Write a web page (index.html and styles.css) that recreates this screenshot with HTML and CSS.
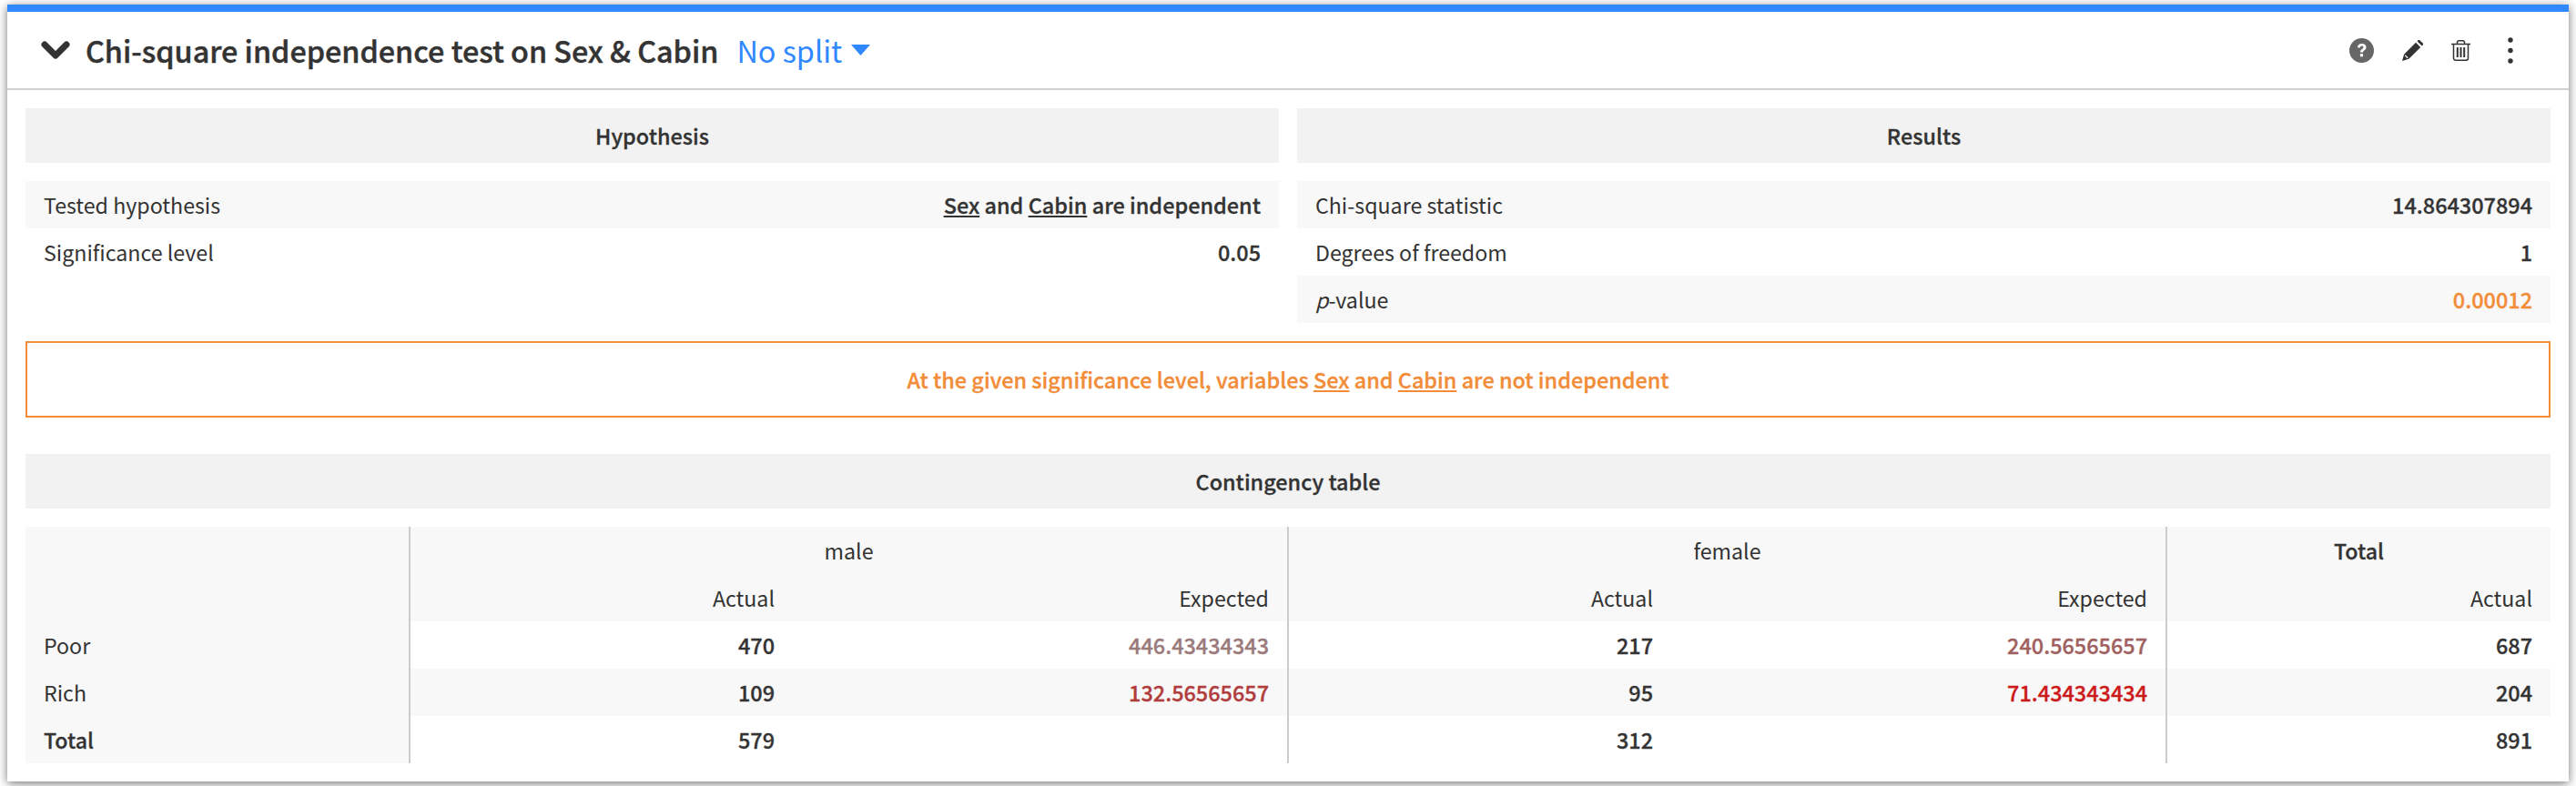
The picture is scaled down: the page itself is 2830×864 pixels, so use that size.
FILE: index.html
```html
<!DOCTYPE html>
<html lang="en">
<head>
<meta charset="utf-8">
<title>Chi-square independence test</title>
<link rel="stylesheet" href="styles.css">
</head>
<body>
<section class="card">
  <header class="card-head">
    <svg class="chevron" viewBox="0 0 32 20"><path d="M4 4l12 12L28 4" fill="none" stroke="#333" stroke-width="7" stroke-linecap="round" stroke-linejoin="round"/></svg>
    <h1 class="title">Chi-square independence test on Sex &amp; Cabin</h1>
    <span class="split">No split</span>
    <svg class="caret" viewBox="0 0 21 12"><path d="M0 0h21L10.5 12z" fill="#2f88ff"/></svg>
    <div class="actions">
      <svg class="ico-help" viewBox="0 0 27 27"><circle cx="13.5" cy="13.5" r="13.5" fill="#666"/><path d="M8.800 10.200c.4-2.800 2.300-4.300 4.900-4.300 2.800 0 4.800 1.600 4.800 4 0 1.800-1 2.700-2.200 3.500-.9.600-1.300 1.100-1.300 2.200h-3c0-2 .8-3 2-3.800.9-.6 1.400-1 1.400-1.800 0-.9-.7-1.400-1.700-1.400-1.100 0-1.700.7-1.900 1.800z" fill="#fff"/><rect x="11.900" y="17.200" width="3.100" height="3.100" fill="#fff"/></svg>
      <svg class="ico-pen" viewBox="0 0 23 23"><path d="M16.500 1.200l1-1c.6-.5 1.300-.5 1.900 0l3.300 3.300c.5.600.5 1.300 0 1.900l-1 1zM15 2.700l5.200 5.200L7.300 20.800 0 23l2.100-7.300z" fill="#333"/><path d="M3.300 16.900l2.800 2.800" stroke="#fff" stroke-width="1.300"/></svg>
      <svg class="ico-trash" viewBox="0 0 21 23"><path d="M0 4.500h21M2.500 4.500V20a2.200 2.200 0 0 0 2.200 2.200h11.600a2.200 2.200 0 0 0 2.200-2.200V4.500M6.500 4.500V2.700c0-1.200.8-1.900 1.900-1.900h4.200c1.100 0 1.900.7 1.900 1.900v1.800" fill="none" stroke="#333" stroke-width="1.500"/><path d="M6.800 8v11M10.500 8v11M14.200 8v11" stroke="#333" stroke-width="2"/></svg>
      <svg class="ico-dots" viewBox="0 0 6 29"><circle cx="3" cy="3" r="2.700" fill="#333"/><circle cx="3" cy="14.500" r="2.700" fill="#333"/><circle cx="3" cy="26" r="2.700" fill="#333"/></svg>
    </div>
  </header>
  <div class="card-body">
    <div class="panels">
      <div class="panel">
        <h2 class="band">Hypothesis</h2>
        <div class="row shade"><span>Tested hypothesis</span><b><u>Sex</u> and <u>Cabin</u> are independent</b></div>
        <div class="row"><span>Significance level</span><b>0.05</b></div>
      </div>
      <div class="panel">
        <h2 class="band">Results</h2>
        <div class="row shade"><span>Chi-square statistic</span><b>14.864307894</b></div>
        <div class="row"><span>Degrees of freedom</span><b>1</b></div>
        <div class="row shade"><span><i>p</i>-value</span><b class="warn">0.00012</b></div>
      </div>
    </div>
    <div class="verdict">At the given significance level, variables <u>Sex</u> and <u>Cabin</u> are not independent</div>
    <h2 class="band">Contingency table</h2>
    <table class="grid">
      <colgroup><col class="c-label"><col class="c-act"><col class="c-exp"><col class="c-act"><col class="c-exp"><col class="c-total"></colgroup>
      <thead>
        <tr><th class="side" rowspan="2"></th><th class="group" colspan="2">male</th><th class="group" colspan="2">female</th><th class="group strong">Total</th></tr>
        <tr><th class="sub">Actual</th><th class="sub">Expected</th><th class="sub">Actual</th><th class="sub">Expected</th><th class="sub">Actual</th></tr>
      </thead>
      <tbody>
        <tr><th class="side">Poor</th><td>470</td><td class="e1">446.43434343</td><td>217</td><td class="e2">240.56565657</td><td>687</td></tr>
        <tr class="alt"><th class="side">Rich</th><td>109</td><td class="e3">132.56565657</td><td>95</td><td class="e4">71.434343434</td><td>204</td></tr>
        <tr><th class="side strong">Total</th><td>579</td><td></td><td>312</td><td></td><td>891</td></tr>
      </tbody>
    </table>
  </div>
</section>
</body>
</html>
```

FILE: styles.css
```css
* { box-sizing: border-box; }
html, body { height: 100%; }
body {
  margin: 0;
  padding: 5px 8px;
  background: #fff;
  color: #333;
  font-family: "Noto Sans CJK SC", "Source Sans Pro", "Noto Sans", sans-serif;
  font-size: 23.2px;
  line-height: 32px;
  overflow: hidden;
}
.card {
  background: #fff;
  border-top: 8px solid #2f88ff;
  height: 854px;
  box-shadow: 0 2px 10px rgba(0,0,0,.55);
}
.card-head {
  height: 86px;
  border-bottom: 2px solid #d0d0d0;
  display: flex;
  align-items: center;
  padding: 0 0 0 37px;
}
.chevron { width: 32px; height: 20px; margin-right: 17px; }
.title { margin: 0; font-size: 32.3px; font-weight: 500; -webkit-text-stroke: .45px currentColor; line-height: 44px; }
.split { color: #2f88ff; font-size: 32.4px; line-height: 44px; margin-left: 20px; }
.caret { width: 21px; height: 12px; margin-left: 10px; }
.actions { margin-left: auto; display: flex; align-items: center; padding-right: 61px; }
.ico-help { width: 27px; height: 27px; margin-right: 31px; }
.ico-pen { width: 23px; height: 23px; margin-right: 31px; }
.ico-trash { width: 21px; height: 23px; margin-right: 41px; }
.ico-dots { width: 6px; height: 29px; }
.card-body { padding: 20px; }
.panels { display: grid; grid-template-columns: 1fr 1fr; gap: 20px; }
.band {
  margin: 0 0 20px;
  height: 60px;
  background: #f2f2f2;
  font-size: 23.4px;
  font-weight: 500;
  -webkit-text-stroke: .3px currentColor;
  line-height: 60px;
  text-align: center;
}
.row {
  height: 52px;
  display: flex;
  justify-content: space-between;
  align-items: center;
  padding: 0 20px;
}
.row b { font-size: 23.45px; font-weight: 500; -webkit-text-stroke: .3px currentColor; }
.shade { background: #f8f8f8; }
.warn { color: #f28c38; }
.verdict {
  margin: 20px 0 40px;
  height: 84px;
  border: 2px solid #f28c38;
  color: #f28c38;
  font-size: 23.4px;
  font-weight: 500;
  -webkit-text-stroke: .3px currentColor;
  line-height: 80px;
  text-align: center;
}
.grid { width: 100%; border-collapse: separate; border-spacing: 0; table-layout: fixed; }
.c-label { width: 423px; }
.c-total { width: 421px; }
.c-act { width: 420px; }
.c-exp { width: 545px; }
.grid th, .grid td { height: 52px; padding: 0 20px; font-weight: 400; text-align: right; }
.grid td { font-size: 23.45px; font-weight: 500; -webkit-text-stroke: .3px currentColor; }
.grid thead th { background: #f8f8f8; }
.grid th.side { background: #f8f8f8; text-align: left; border-right: 2px solid #ccc; }
.grid th.group { text-align: center; border-right: 2px solid #ccc; }
.grid th.group:last-child { border-right: 0; }
.grid .strong { font-weight: 500; -webkit-text-stroke: .3px currentColor; }
.grid th.sub:nth-child(2), .grid th.sub:nth-child(4) { border-right: 2px solid #ccc; }
.grid tbody td:nth-child(3), .grid tbody td:nth-child(5) { border-right: 2px solid #ccc; }
.alt td { background: #f8f8f8; }
.e1 { color: #9a7a7a; }
.e2 { color: #a06060; }
.e3 { color: #b13c3c; }
.e4 { color: #cc1a1a; }
```
